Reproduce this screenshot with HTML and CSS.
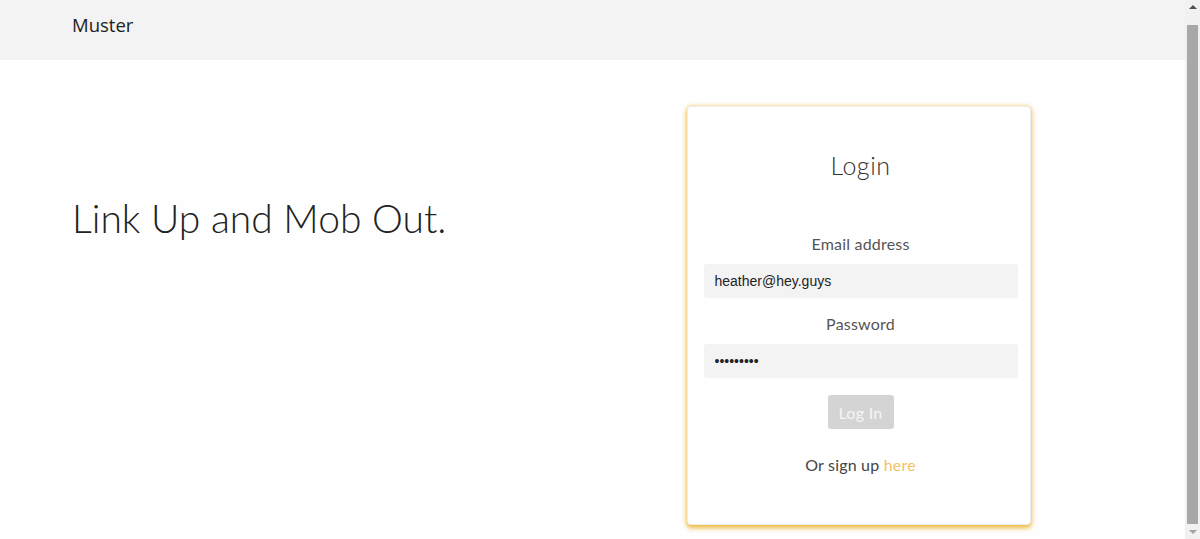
FILE: index.html
```html
<!DOCTYPE html>
<html lang="en">
<head>
<meta charset="utf-8">
<title>Muster</title>
<link rel="stylesheet" href="styles.css">
</head>
<body>
<nav class="navbar">
  <div class="brand">Muster</div>
</nav>
<main class="main">
  <section class="hero">
    <h1 class="tagline">Link Up and Mob Out.</h1>
  </section>
  <section class="card">
    <h2 class="card-title">Login</h2>
    <form class="form">
      <label class="label" for="email">Email address</label>
      <input class="input" id="email" type="email" value="heather@hey.guys">
      <label class="label" for="pw">Password</label>
      <input class="input" id="pw" type="password" value="password1">
      <button class="btn" type="button">Log In</button>
    </form>
    <p class="signup">Or sign up <a class="link" href="#">here</a></p>
  </section>
</main>
<div class="scrollbar" aria-hidden="true">
  <span class="sb-arrow sb-up"></span>
  <span class="sb-thumb"></span>
  <span class="sb-arrow sb-down"></span>
</div>
</body>
</html>
```
FILE: styles.css
```css
html, body {
  margin: 0;
  padding: 0;
}
body {
  background: #fefefe;
  font-family: "Lato", "Open Sans", sans-serif;
  color: #333;
}
.navbar {
  height: 60px;
  background: #f3f3f3;
  display: flex;
  align-items: center;
  padding: 0 72px;
}
.brand {
  font-family: "Open Sans", sans-serif;
  font-size: 18.5px;
  color: #222;
  margin-top: -12px;
}
.main {
  display: flex;
  padding: 46px 0 10px 72px;
}
.hero {
  width: 615px;
  padding-top: 88px;
}
.tagline {
  margin: 0;
  font-weight: 300;
  font-size: 39px;
  letter-spacing: 0;
  color: #222;
  line-height: 48px;
}
.card {
  width: 344px;
  height: 419px;
  box-sizing: border-box;
  background: #fff;
  border: 1px solid #eee;
  border-radius: 4px;
  box-shadow: 0 3px 5px rgba(236, 180, 50, 0.9), 0 0 4px rgba(245, 205, 110, 0.8);
  padding: 42px 13px 0 16px;
  text-align: center;
}
.card-title {
  margin: 0;
  font-weight: 300;
  font-size: 25px;
  line-height: 32px;
  color: #333;
  letter-spacing: 0.5px;
}
.form {
  margin-top: 52px;
  display: flex;
  flex-direction: column;
  align-items: center;
}
.label {
  font-size: 16px;
  color: #555;
  line-height: 22px;
  margin-bottom: 9px;
  letter-spacing: 0.2px;
}
.input {
  width: 314px;
  height: 34px;
  box-sizing: border-box;
  border: none;
  border-radius: 3px;
  background: #f3f3f3;
  padding: 0 11px;
  font-family: "Liberation Sans", Arial, sans-serif;
  font-size: 14px;
  color: #222;
  margin-bottom: 15px;
  outline: none;
}
.btn {
  margin-top: 2px;
  width: 66px;
  height: 34px;
  border: none;
  border-radius: 3px;
  background: #d4d4d4;
  color: #f4f4f4;
  font-family: "Lato", sans-serif;
  font-size: 16px;
  letter-spacing: 0.3px;
  padding: 0;
}
.signup {
  margin: 26px 0 0;
  font-size: 16px;
  color: #444;
  letter-spacing: 0.2px;
}
.link {
  color: #f3c268;
  text-decoration: none;
}
.scrollbar {
  position: fixed;
  top: 0;
  right: 0;
  width: 15px;
  height: 100%;
  background: #f1f1f1;
  display: flex;
  flex-direction: column;
  align-items: center;
}
.sb-arrow {
  width: 0;
  height: 0;
  border-left: 4px solid transparent;
  border-right: 4px solid transparent;
}
.sb-up {
  margin-top: 5px;
  border-bottom: 4px solid #505050;
}
.sb-thumb {
  margin-top: 16px;
  width: 11px;
  flex: 1;
  background: #a8a8a8;
}
.sb-down {
  margin: 6px 0 5px;
  border-top: 4px solid #a3a3a3;
}
```
